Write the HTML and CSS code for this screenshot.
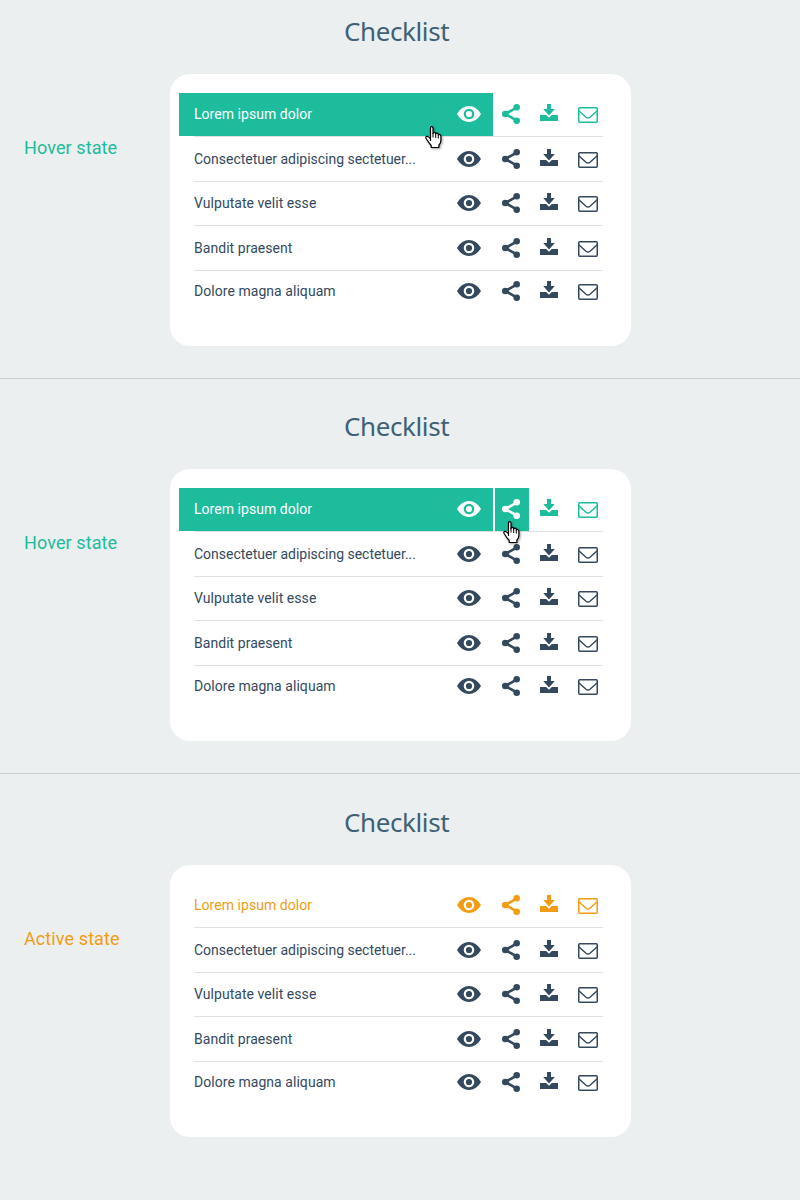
FILE: index.html
```html
<!DOCTYPE html>
<html lang="en">
<head>
<meta charset="utf-8">
<title>Checklist</title>
<link rel="stylesheet" href="styles.css">
</head>
<body>
<svg class="sprite" aria-hidden="true">
  <symbol id="eye" viewBox="0 0 24 16"><path fill-rule="evenodd" fill="currentColor" d="M0 8C3 2.8 7.400 0 12 0S21 2.800 24 8C21 13.200 16.600 16 12 16S3 13.200 0 8zM12 2.700a5.300 5.300 0 1 0 0 10.600a5.300 5.300 0 1 0 0-10.600zM12 4.900a3.100 3.100 0 1 1 0 6.200a3.100 3.100 0 1 1 0-6.200z"/></symbol>
  <symbol id="share" viewBox="0 0 18 20"><path d="M15 3.300L3.400 10L15 16.700" fill="none" stroke="currentColor" stroke-width="2.700"/><g fill="currentColor"><circle cx="14.700" cy="3.300" r="3.300"/><circle cx="3.300" cy="10" r="3.300"/><circle cx="14.700" cy="16.700" r="3.300"/></g></symbol>
  <symbol id="download" viewBox="0 0 18 17"><path fill="currentColor" d="M7 0h4v5h3.800L9 11.500L3.200 5H7zM0 11h6.200L9 13.800L11.800 11H18v6H0z"/></symbol>
  <symbol id="mail" viewBox="0 0 20 16"><g fill="none" stroke="currentColor" stroke-width="1.500"><rect x=".75" y=".75" width="18.500" height="14.500" rx="1"/><path d="M.8 3.800L8 10.200Q10 11.900 12 10.200L19.200 3.800"/></g></symbol>
  <symbol id="hand" viewBox="0 0 18 23"><path fill="#fff" stroke="#000" stroke-width="1.200" stroke-linejoin="round" d="M5.500 14.500V2.200Q5.500.7 6.700.7T8 2.200V7.500Q8 6.400 9.300 6.400T10.700 8Q11 7 12.200 7.200T13.300 9Q13.800 8.200 14.800 8.600T15.900 10.500V14.500Q15.900 17 13.900 19V21.500H6.200V19.500Q3.500 16.500 1 12.200Q.4 10.800 1.700 10.400Q3.300 10 5.500 13z"/><path fill="none" stroke="#000" d="M8 7v4.500M10.700 8v4M13.300 9v3.500"/></symbol>
</svg>

<section class="state state-first">
  <h1 class="title">Checklist</h1>
  <p class="label">Hover state</p>
  <ul class="card">
    <li class="row hover"><a class="name filled"><span>Lorem ipsum dolor</span><svg class="eye"><use href="#eye"/></svg><svg class="hand hand-name"><use href="#hand"/></svg></a><a class="tool"><svg class="share"><use href="#share"/></svg></a><a class="tool"><svg class="download"><use href="#download"/></svg></a><a class="tool"><svg class="mail"><use href="#mail"/></svg></a></li>
    <li class="row"><a class="name"><span class="long">Consectetuer adipiscing sectetuer...</span><svg class="eye"><use href="#eye"/></svg></a><a class="tool"><svg class="share"><use href="#share"/></svg></a><a class="tool"><svg class="download"><use href="#download"/></svg></a><a class="tool"><svg class="mail"><use href="#mail"/></svg></a></li>
    <li class="row"><a class="name"><span>Vulputate velit esse</span><svg class="eye"><use href="#eye"/></svg></a><a class="tool"><svg class="share"><use href="#share"/></svg></a><a class="tool"><svg class="download"><use href="#download"/></svg></a><a class="tool"><svg class="mail"><use href="#mail"/></svg></a></li>
    <li class="row"><a class="name"><span>Bandit praesent</span><svg class="eye"><use href="#eye"/></svg></a><a class="tool"><svg class="share"><use href="#share"/></svg></a><a class="tool"><svg class="download"><use href="#download"/></svg></a><a class="tool"><svg class="mail"><use href="#mail"/></svg></a></li>
    <li class="row"><a class="name"><span>Dolore magna aliquam</span><svg class="eye"><use href="#eye"/></svg></a><a class="tool"><svg class="share"><use href="#share"/></svg></a><a class="tool"><svg class="download"><use href="#download"/></svg></a><a class="tool"><svg class="mail"><use href="#mail"/></svg></a></li>
  </ul>
</section>

<section class="state">
  <h1 class="title">Checklist</h1>
  <p class="label">Hover state</p>
  <ul class="card">
    <li class="row hover"><a class="name filled"><span>Lorem ipsum dolor</span><svg class="eye"><use href="#eye"/></svg></a><a class="tool filled"><svg class="share"><use href="#share"/></svg><svg class="hand hand-share"><use href="#hand"/></svg></a><a class="tool"><svg class="download"><use href="#download"/></svg></a><a class="tool"><svg class="mail"><use href="#mail"/></svg></a></li>
    <li class="row"><a class="name"><span class="long">Consectetuer adipiscing sectetuer...</span><svg class="eye"><use href="#eye"/></svg></a><a class="tool"><svg class="share"><use href="#share"/></svg></a><a class="tool"><svg class="download"><use href="#download"/></svg></a><a class="tool"><svg class="mail"><use href="#mail"/></svg></a></li>
    <li class="row"><a class="name"><span>Vulputate velit esse</span><svg class="eye"><use href="#eye"/></svg></a><a class="tool"><svg class="share"><use href="#share"/></svg></a><a class="tool"><svg class="download"><use href="#download"/></svg></a><a class="tool"><svg class="mail"><use href="#mail"/></svg></a></li>
    <li class="row"><a class="name"><span>Bandit praesent</span><svg class="eye"><use href="#eye"/></svg></a><a class="tool"><svg class="share"><use href="#share"/></svg></a><a class="tool"><svg class="download"><use href="#download"/></svg></a><a class="tool"><svg class="mail"><use href="#mail"/></svg></a></li>
    <li class="row"><a class="name"><span>Dolore magna aliquam</span><svg class="eye"><use href="#eye"/></svg></a><a class="tool"><svg class="share"><use href="#share"/></svg></a><a class="tool"><svg class="download"><use href="#download"/></svg></a><a class="tool"><svg class="mail"><use href="#mail"/></svg></a></li>
  </ul>
</section>

<section class="state state-last">
  <h1 class="title">Checklist</h1>
  <p class="label label-active">Active state</p>
  <ul class="card">
    <li class="row active"><a class="name"><span>Lorem ipsum dolor</span><svg class="eye"><use href="#eye"/></svg></a><a class="tool"><svg class="share"><use href="#share"/></svg></a><a class="tool"><svg class="download"><use href="#download"/></svg></a><a class="tool"><svg class="mail"><use href="#mail"/></svg></a></li>
    <li class="row"><a class="name"><span class="long">Consectetuer adipiscing sectetuer...</span><svg class="eye"><use href="#eye"/></svg></a><a class="tool"><svg class="share"><use href="#share"/></svg></a><a class="tool"><svg class="download"><use href="#download"/></svg></a><a class="tool"><svg class="mail"><use href="#mail"/></svg></a></li>
    <li class="row"><a class="name"><span>Vulputate velit esse</span><svg class="eye"><use href="#eye"/></svg></a><a class="tool"><svg class="share"><use href="#share"/></svg></a><a class="tool"><svg class="download"><use href="#download"/></svg></a><a class="tool"><svg class="mail"><use href="#mail"/></svg></a></li>
    <li class="row"><a class="name"><span>Bandit praesent</span><svg class="eye"><use href="#eye"/></svg></a><a class="tool"><svg class="share"><use href="#share"/></svg></a><a class="tool"><svg class="download"><use href="#download"/></svg></a><a class="tool"><svg class="mail"><use href="#mail"/></svg></a></li>
    <li class="row"><a class="name"><span>Dolore magna aliquam</span><svg class="eye"><use href="#eye"/></svg></a><a class="tool"><svg class="share"><use href="#share"/></svg></a><a class="tool"><svg class="download"><use href="#download"/></svg></a><a class="tool"><svg class="mail"><use href="#mail"/></svg></a></li>
  </ul>
</section>
</body>
</html>
```

FILE: styles.css
```css
* { box-sizing: border-box; }
body {
  margin: 0;
  height: 1200px;
  background: #ebeff0;
  color: #34495e;
  font-family: Roboto, "Liberation Sans", sans-serif;
}
.sprite { position: absolute; width: 0; height: 0; }
.state {
  display: grid;
  grid-template-columns: 170px 461px;
  grid-template-rows: 58px 272px;
  align-items: start;
  height: 395px;
  padding-top: 32px;
  border-bottom: 1px solid #c8cdcf;
}
.state-first { height: 379px; padding-top: 16px; }
.state-last { height: 426px; padding-top: 33px; border: 0; }
.title {
  grid-column: 1 / -1;
  width: 105px;
  margin: 0 0 0 344px;
  color: #3f6175;
  font: 400 26px/30px "Noto Sans", sans-serif;
  letter-spacing: -0.4px;
  white-space: nowrap;
}
.label {
  margin: 63px 0 0 24px;
  color: #1dbc9c;
  font-size: 18px;
  line-height: 22px;
  letter-spacing: 0.1px;
  white-space: nowrap;
}
.label-active { color: #f39c12; }
.card {
  height: 272px;
  margin: 0;
  padding: 19px 28px 0 24px;
  border-radius: 20px;
  background: #fff;
  list-style: none;
}
.row {
  display: grid;
  grid-template-columns: 299px 2px 34px 40px 34px;
  height: 45px;
  padding-top: 1px;
  border-bottom: 1px solid #e0e1e3;
}
.row:nth-child(odd) { height: 44px; padding-top: 0; }
.row:last-child { height: 43px; margin-top: -1px; border: 0; }
.name {
  position: relative;
  display: flex;
  justify-content: space-between;
  grid-column: 1;
  height: 43px;
  margin-left: -15px;
  padding: 0 12px 0 15px;
  font-size: 14px;
  line-height: 42px;
  letter-spacing: 0.05px;
  white-space: nowrap;
}
.long { letter-spacing: -0.02px; }
.tool { position: relative; height: 43px; }
.tool:nth-child(2) { grid-column: 3; }
.eye { width: 24px; height: 16px; margin-top: 13px; }
.tool svg { display: block; }
.share { width: 18px; height: 20px; margin: 11px 0 0 7px; }
.download { width: 18px; height: 17px; margin: 11px 0 0 11px; }
.mail { width: 20px; height: 16px; margin: 14px 0 0 9px; }
.hover { color: #1dbc9c; }
.active { color: #f39c12; }
.filled { background: #1dbc9c; color: #fff; }
.hand {
  position: absolute;
  z-index: 1;
  width: 18px;
  height: 23px;
  filter: drop-shadow(1px 1px 1px rgba(0, 0, 0, 0.4));
}
.hand-name { left: 246px; top: 33px; }
.hand-share { left: 8px; top: 33px; }
```
